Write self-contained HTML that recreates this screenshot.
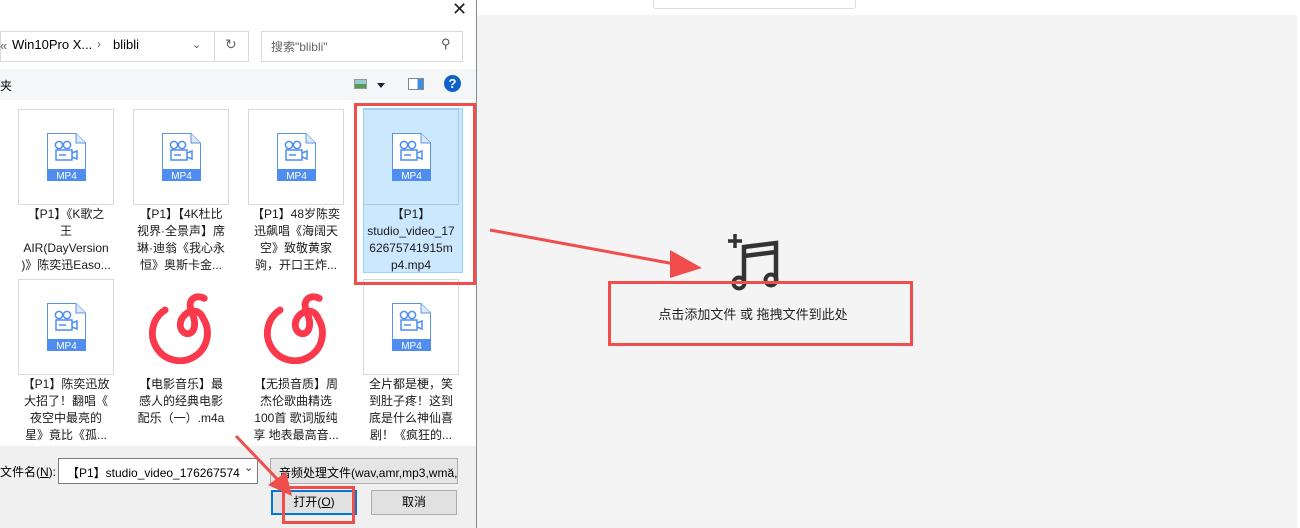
<!DOCTYPE html>
<html><head><meta charset="utf-8"><style>
*{margin:0;padding:0;box-sizing:border-box}
body{width:1300px;height:528px;position:relative;overflow:hidden;background:#fff;font-family:"Liberation Sans","Noto Sans CJK SC",sans-serif;font-size:12px;color:#000}
.a{position:absolute}
.tile{position:absolute;width:96px;height:96px;border:1px solid #d9d9d9;background:#fff}
.cap{position:absolute;width:100px;text-align:center;font-size:12px;line-height:17px;color:#1a1a1a}
.red{position:absolute;border:3px solid #f24d4d}
</style></head><body>
<div class="a" style="left:477px;top:0;width:823px;height:15px;background:#fff"></div>
<div class="a" style="left:653px;top:-2px;width:203px;height:11px;border:1px solid #ddd;border-radius:3px;background:#fff"></div>
<div class="a" style="left:477px;top:15px;width:820px;height:513px;background:#f4f4f4"></div>
<svg class="a" style="left:726px;top:230px" width="60" height="62" viewBox="0 0 60 62">
<path d="M9 4v14M2 11h14" stroke="#333" stroke-width="3.5"/>
<path d="M18 52V17L50 13v38" stroke="#333" stroke-width="4.5" fill="none"/>
<path d="M18 26L50 22" stroke="#333" stroke-width="4.5"/>
<circle cx="13" cy="53" r="5.5" stroke="#333" stroke-width="4" fill="none"/>
<circle cx="45" cy="50" r="5.5" stroke="#333" stroke-width="4" fill="none"/>
</svg>
<div class="red" style="left:608px;top:281px;width:305px;height:65px"></div>
<div class="a" style="left:608px;top:304px;width:290px;text-align:center;font-size:13px;color:#222">点击添加文件 或 拖拽文件到此处</div>
<svg class="a" style="left:480px;top:220px" width="230" height="60"><path d="M10 10L200 45" stroke="#f24d4d" stroke-width="3"/><path d="M190 30L222 48L190 58Z" fill="#f24d4d"/></svg>

<div class="a" style="left:0;top:0;width:477px;height:528px;background:#fff;border-right:1px solid #888"></div>
<div class="a" style="left:452px;top:-1px;font-size:18px;color:#222">✕</div>
<div class="a" style="left:0;top:31px;width:249px;height:31px;border:1px solid #d9d9d9"></div>
<div class="a" style="left:214px;top:31px;width:1px;height:31px;background:#d9d9d9"></div>
<div class="a" style="left:0;top:38px;font-size:13px;color:#666">«</div>
<div class="a" style="left:12px;top:37px;font-size:13px">Win10Pro X...</div>
<div class="a" style="left:97px;top:37px;font-size:12px;color:#666">›</div>
<div class="a" style="left:113px;top:37px;font-size:13px">blibli</div>
<div class="a" style="left:192px;top:38px;font-size:11px;color:#555">⌄</div>
<div class="a" style="left:225px;top:36px;font-size:14px;color:#666">↻</div>
<div class="a" style="left:261px;top:31px;width:202px;height:31px;border:1px solid #d9d9d9"></div>
<div class="a" style="left:271px;top:38px;font-size:12px;color:#666">搜索"blibli"</div>
<div class="a" style="left:441px;top:36px;font-size:13px;color:#555">⚲</div>
<div class="a" style="left:0;top:69px;width:476px;height:31px;background:#f5f6f7"></div>
<div class="a" style="left:0;top:77px;font-size:12px">夹</div>
<div class="a" style="left:354px;top:79px;width:13px;height:10px;border:1px solid #999;background:linear-gradient(#9cc 50%,#595 50%)"></div>
<div class="a" style="left:377px;top:83px;border:4px solid transparent;border-top:5px solid #223;"></div>
<div class="a" style="left:408px;top:78px;width:16px;height:12px;border:1px solid #888;background:linear-gradient(90deg,#fff 60%,#3a8ee6 60%)"></div>
<div class="a" style="left:444px;top:75px;width:17px;height:17px;border-radius:50%;background:#0f62c8;color:#fff;font-weight:bold;text-align:center;line-height:17px;font-size:13px">?</div>

<div class="a" style="left:363px;top:108px;width:100px;height:165px;background:#cce8ff;border:1px solid #99d1ff"></div>

<div class="tile" style="left:18px;top:109px"></div>
<div class="tile" style="left:133px;top:109px"></div>
<div class="tile" style="left:248px;top:109px"></div>
<div class="tile" style="left:363px;top:109px;background:#cce8ff;border-color:#aac8e0"></div>
<div class="tile" style="left:18px;top:279px"></div>
<div class="tile" style="left:363px;top:279px"></div>

<svg width="0" height="0" style="position:absolute"><defs><g id="mp4">
<path d="M0.5 0.5H29L38.5 10V47.5H0.5Z" fill="#fff" stroke="#5b93e8"/>
<path d="M29 0.5V10H38.5" fill="#dde8f8" stroke="#5b93e8"/>
<rect x="0" y="36" width="39" height="12" fill="#4f8ef0"/>
<circle cx="12" cy="12" r="3.6" fill="none" stroke="#4f8ef0" stroke-width="1.5"/>
<circle cx="20" cy="12" r="3.6" fill="none" stroke="#4f8ef0" stroke-width="1.5"/>
<rect x="9" y="17" width="16" height="10" fill="none" stroke="#4f8ef0" stroke-width="1.5"/>
<path d="M12 22h7M25 20l5-2v8l-5-2" fill="none" stroke="#4f8ef0" stroke-width="1.5"/>
<text x="19.5" y="46" font-size="10" fill="#fff" text-anchor="middle" font-family="Liberation Sans">MP4</text>
</g>
<g id="ne"><path d="M14 17A26 26 0 1 0 50 25C46 14 33 17 29 27C26 37 35 43 40 37C44 31 41 23 38 15C36 7 43 2 51 6" fill="none" stroke="#fa3a4c" stroke-width="6.5" stroke-linecap="round"/></g>
</defs></svg>
<svg class="a" style="left:47px;top:133px" width="40" height="49"><use href="#mp4"/></svg>
<svg class="a" style="left:162px;top:133px" width="40" height="49"><use href="#mp4"/></svg>
<svg class="a" style="left:277px;top:133px" width="40" height="49"><use href="#mp4"/></svg>
<svg class="a" style="left:392px;top:133px" width="40" height="49"><use href="#mp4"/></svg>
<svg class="a" style="left:47px;top:303px" width="40" height="49"><use href="#mp4"/></svg>
<svg class="a" style="left:392px;top:303px" width="40" height="49"><use href="#mp4"/></svg>
<svg class="a" style="left:148px;top:292px" width="68" height="72" viewBox="-2 0 64 68"><use href="#ne"/></svg>
<svg class="a" style="left:263px;top:292px" width="68" height="72" viewBox="-2 0 64 68"><use href="#ne"/></svg>

<div class="cap" style="left:16px;top:206px">【P1】《K歌之<br>王<br>AIR(DayVersion<br>)》陈奕迅Easo...</div>
<div class="cap" style="left:131px;top:206px">【P1】【4K杜比<br>视界·全景声】席<br>琳·迪翁《我心永<br>恒》奥斯卡金...</div>
<div class="cap" style="left:246px;top:206px">【P1】48岁陈奕<br>迅飙唱《海阔天<br>空》致敬黄家<br>驹，开口王炸...</div>
<div class="cap" style="left:361px;top:206px">【P1】<br>studio_video_17<br>62675741915m<br>p4.mp4</div>
<div class="cap" style="left:16px;top:376px">【P1】陈奕迅放<br>大招了！翻唱《<br>夜空中最亮的<br>星》竟比《孤...</div>
<div class="cap" style="left:131px;top:376px">【电影音乐】最<br>感人的经典电影<br>配乐（一）.m4a</div>
<div class="cap" style="left:246px;top:376px">【无损音质】周<br>杰伦歌曲精选<br>100首 歌词版纯<br>享 地表最高音...</div>
<div class="cap" style="left:361px;top:376px">全片都是梗，笑<br>到肚子疼！这到<br>底是什么神仙喜<br>剧！《疯狂的...</div>

<div class="red" style="left:354px;top:103px;width:122px;height:182px"></div>

<div class="a" style="left:0;top:446px;width:476px;height:82px;background:#f0f0f0"></div>
<div class="a" style="left:0;top:463px;font-size:12px">文件名(<u>N</u>):</div>
<div class="a" style="left:58px;top:458px;width:200px;height:26px;border:1px solid #7a7a7a;background:#fff;font-size:12px;padding:5px 8px;white-space:nowrap;overflow:hidden">【P1】studio_video_176267574</div>
<div class="a" style="left:244px;top:461px;font-size:11px;color:#333">⌄</div>
<div class="a" style="left:270px;top:458px;width:188px;height:26px;border:1px solid #adadad;background:#e5e5e5;font-size:12px;padding:5px 8px;white-space:nowrap;overflow:hidden">音频处理文件(wav,amr,mp3,wma,</div>
<div class="a" style="left:446px;top:461px;font-size:11px;color:#333">⌄</div>
<div class="a" style="left:271px;top:490px;width:86px;height:25px;border:2px solid #0078d7;background:#e1e1e1;text-align:center;line-height:21px">打开(<u>O</u>)</div>
<div class="a" style="left:371px;top:490px;width:86px;height:25px;border:1px solid #adadad;background:#e1e1e1;text-align:center;line-height:23px">取消</div>
<div class="red" style="left:282px;top:486px;width:73px;height:38px"></div>
<svg class="a" style="left:230px;top:430px" width="70" height="70"><path d="M6 6L50 52" stroke="#f24d4d" stroke-width="3"/><path d="M38 55L62 66L56 42Z" fill="#f24d4d"/></svg>
</body></html>
